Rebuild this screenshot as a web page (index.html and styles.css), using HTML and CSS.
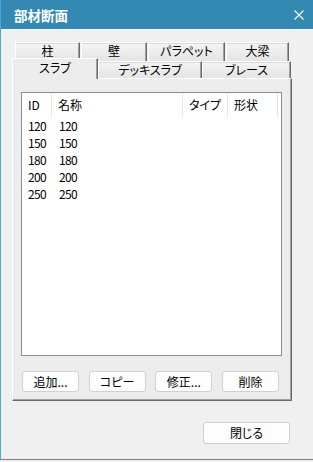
FILE: index.html
```html
<!DOCTYPE html>
<html lang="ja">
<head>
    <meta charset="UTF-8">
    <title>部材断面</title>
    <link rel="stylesheet" href="styles.css">
</head>
<body>
    <div class="window">
        <div class="titlebar">
            <span class="title">部材断面</span>
            <svg class="close-icon" width="10" height="10" viewBox="0 0 10 10">
                <path d="M0.5 0.5 L9.5 9.5 M9.5 0.5 L0.5 9.5" stroke="#fff" stroke-width="1.1" fill="none"/>
            </svg>
        </div>

        <div class="tabs">
            <div class="tab-row back">
                <div class="tab w-col">柱</div>
                <div class="tab w-wall">壁</div>
                <div class="tab w-para">パラペット</div>
                <div class="tab w-beam">大梁</div>
            </div>
            <div class="tab-row front">
                <div class="tab selected w-slab">スラブ</div>
                <div class="tab w-deck">デッキスラブ</div>
                <div class="tab w-brace">ブレース</div>
            </div>
        </div>

        <div class="panel">
            <div class="list">
                <div class="list-head">
                    <div class="col">ID</div>
                    <div class="col">名称</div>
                    <div class="col">タイプ</div>
                    <div class="col">形状</div>
                </div>
                <div class="list-row"><span>120</span><span>120</span></div>
                <div class="list-row"><span>150</span><span>150</span></div>
                <div class="list-row"><span>180</span><span>180</span></div>
                <div class="list-row"><span>200</span><span>200</span></div>
                <div class="list-row"><span>250</span><span>250</span></div>
            </div>
            <div class="panel-buttons">
                <button class="btn">追加...</button>
                <button class="btn">コピー</button>
                <button class="btn">修正...</button>
                <button class="btn">削除</button>
            </div>
        </div>

        <div class="footer">
            <button class="btn close-btn">閉じる</button>
        </div>
    </div>
</body>
</html>
```

FILE: styles.css
```css
html, body {
    margin: 0;
    padding: 0;
    background: #f0f0f0;
}
body {
    font-family: "Noto Sans CJK JP", "Noto Sans", sans-serif;
    font-size: 12px;
    font-feature-settings: "palt";
    color: #000;
}
.window {
    width: 313px;
    height: 460px;
    box-sizing: border-box;
    border-left: 1px solid #4ea6d6;
    border-bottom: 1px solid #7d7d7d;
    background: #f0f0f0;
}
.titlebar {
    height: 29px;
    background: #3489b3;
    border-bottom: 1px solid #fafafa;
    display: flex;
    align-items: center;
    justify-content: space-between;
    padding: 0 9px 0 13px;
}
.title {
    color: #fff;
    font-weight: bold;
    font-size: 13.5px;
    line-height: 16px;
}
.close-icon {
    display: block;
}

/* tabs */
.tabs {
    margin-top: 12px;
}
.tab-row {
    display: flex;
}
.tab-row.back {
    padding-left: 14px;
    height: 19px;
    gap: 1px;
}
.tab-row.front {
    padding-left: 11px;
    margin-top: -3px;
    height: 20px;
    align-items: flex-end;
}
.tab {
    box-sizing: border-box;
    text-align: center;
    background: linear-gradient(#f4f4f4, #e4e4e4);
    border-top: 1px solid #fff;
    border-left: 1px solid #fff;
    border-right: 1px solid #6a6a6a;
    box-shadow: inset -1px 0 #a0a0a0, inset 0 1px #dadada;
    line-height: 15px;
    white-space: nowrap;
}
.back .tab {
    height: 19px;
}
.front .tab {
    height: 17px;
    padding-top: 0;
}
.tab.selected {
    height: 21px;
    margin-bottom: -1px;
    background: #ececec;
    box-shadow: inset -1px 0 #a0a0a0;
    position: relative;
    z-index: 1;
    line-height: 17px;
}
.w-col { width: 65px; }
.w-wall { width: 66px; }
.w-para { width: 77px; }
.w-beam { width: 63px; }
.w-slab { width: 86px; }
.w-deck { width: 104px; }
.w-brace { width: 89px; }

/* tab page */
.panel {
    width: 280px;
    margin-left: 11px;
    box-sizing: border-box;
    background: #ececec;
    border-top: 1px solid #fff;
    border-left: 1px solid #fff;
    border-right: 1px solid #6a6a6a;
    border-bottom: 1px solid #6a6a6a;
    box-shadow: inset -1px -1px #a0a0a0;
    padding: 13px 9px 8px 8px;
}
.list {
    height: 264px;
    box-sizing: border-box;
    background: #fff;
    border: 1px solid #8a8d93;
}
.list-head {
    display: grid;
    grid-template-columns: 30px 131px 45px 50px;
    height: 24px;
}
.list-head .col {
    border-right: 1px solid #e6e6e6;
    padding-left: 6px;
    line-height: 24px;
}
.list-row {
    display: grid;
    grid-template-columns: 30px 131px;
    height: 17px;
    line-height: 17px;
    letter-spacing: -0.6px;
}
.list-row span {
    padding-left: 6px;
}
.list-row span + span {
    padding-left: 7px;
}

.panel-buttons {
    display: flex;
    justify-content: space-between;
    margin: 15px 3px 0 1px;
}
.btn {
    font-family: inherit;
    font-size: 12px;
    font-feature-settings: "palt";
    color: #000;
    width: 57px;
    height: 21px;
    padding: 0;
    background: #fdfdfd;
    border: 1px solid #d0d0d0;
    border-radius: 3px;
    line-height: 18px;
}

.footer {
    display: flex;
    justify-content: flex-end;
    padding-right: 23px;
    margin-top: 21px;
}
.close-btn {
    width: 87px;
    height: 22px;
}
```
